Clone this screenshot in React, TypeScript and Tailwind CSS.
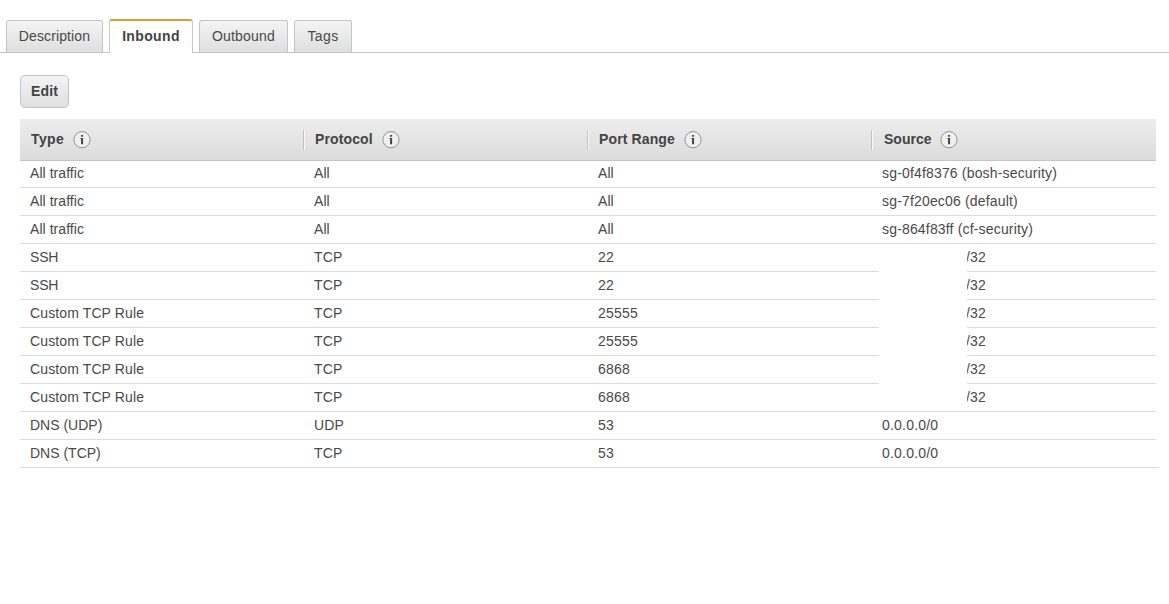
const tabs = [
  { label: "Description", size: "w-[97px]", spacing: "tracking-[0.12px]" },
  { label: "Inbound", size: "w-[84px]", spacing: "tracking-[0.36px]", active: true },
  { label: "Outbound", size: "w-[89px]", spacing: "tracking-[0.2px]" },
  { label: "Tags", size: "w-[58px]", spacing: "tracking-[0.4px]" },
];

const columns = [
  { label: "Type", spacing: "tracking-[0.4px]", width: "w-[41.5px]" },
  { label: "Protocol", spacing: "tracking-[0.12px]", width: "w-[66.5px]" },
  { label: "Port Range", spacing: "tracking-[0.12px]", width: "w-[84.5px]" },
  { label: "Source", spacing: "tracking-[0px]", width: "w-[55.5px]" },
];

const rules = [
  ["All traffic", "All", "All", "sg-0f4f8376 (bosh-security)"],
  ["All traffic", "All", "All", "sg-7f20ec06 (default)"],
  ["All traffic", "All", "All", "sg-864f83ff (cf-security)"],
  ["SSH", "TCP", "22", "/32"],
  ["SSH", "TCP", "22", "/32"],
  ["Custom TCP Rule", "TCP", "25555", "/32"],
  ["Custom TCP Rule", "TCP", "25555", "/32"],
  ["Custom TCP Rule", "TCP", "6868", "/32"],
  ["Custom TCP Rule", "TCP", "6868", "/32"],
  ["DNS (UDP)", "UDP", "53", "0.0.0.0/0"],
  ["DNS (TCP)", "TCP", "53", "0.0.0.0/0"],
];

function cellSpacing(text: string) {
  if (text.startsWith("All")) return "tracking-[0.05px]";
  if (text === "SSH") return "tracking-[-0.2px]";
  if (text.startsWith("DNS")) return "tracking-[0px]";
  if (text.startsWith("Custom")) return "tracking-[0.12px]";
  if (text.startsWith("sg-")) return "tracking-[0.17px]";
  return "tracking-[0.2px]";
}

function InfoIcon() {
  return (
    <svg width="18" height="18" viewBox="0 0 18 18" className="shrink-0">
      <circle cx="9" cy="8.7" r="8.1" fill="#f0f0f0" stroke="#929292" strokeWidth="1" />
      <path d="M8 4h2.1v1.8H8zM7.2 7h2.9v6.2H8V7.8h-.8z" fill="#4a4a4a" />
    </svg>
  );
}

export default function App() {
  return (
    <div className="h-[604px] w-full overflow-hidden bg-white font-['Liberation_Sans',Arial,sans-serif] text-[14px] leading-[18px] text-[#494949]">
      <div className="flex h-[53px] items-end gap-1.5 border-b border-[#c4c4c4] pl-1.5">
        {tabs.map((tab) => (
          <div
            key={tab.label}
            className={
              tab.active
                ? `-mb-px flex h-[34px] justify-center rounded-t-[3px] border-x border-t-2 border-x-[#c8c8c8] border-t-[#dd9f35] bg-white pt-1.5 font-bold text-[#444] ${tab.size} ${tab.spacing}`
                : `flex h-8 justify-center rounded-t-[3px] border border-b-0 border-[#c4c4c4] bg-linear-to-b from-[#f4f4f4] to-[#dfdfdf] pt-1.5 ${tab.size} ${tab.spacing}`
            }
          >
            {tab.label}
          </div>
        ))}
      </div>

      <div className="pt-[22px] pl-5">
        <button className="flex h-[33px] w-[49px] justify-center rounded-[5px] border border-[#c4c4c4] bg-linear-to-b from-[#f4f4f4] to-[#dfdfdf] pt-1.5 font-bold tracking-[0.2px] text-[#444]">
          Edit
        </button>

        <div className="mt-[11px] w-[1136px]">
          <div className="grid h-[42px] grid-cols-[283px_284px_284px_285px] items-center border-b border-[#c4c4c4] bg-linear-to-b from-[#ededed] to-[#dcdcdc] text-[#444]">
            {columns.map((col, i) => (
              <div
                key={col.label}
                className={`flex h-5 items-center font-bold ${
                  i === 0
                    ? ""
                    : "border-l border-[#c2c2c2] shadow-[inset_1px_0_0_#f8f8f8]"
                } ${i === 3 ? "pl-3" : "pl-[11px]"} ${col.spacing}`}
              >
                <span className={`-mt-0.5 whitespace-nowrap ${col.width}`}>{col.label}</span>
                <InfoIcon />
              </div>
            ))}
          </div>

          <div className="relative">
            {rules.map((cells, i) => {
              const masked = cells[3] === "/32";
              return (
                <div
                  key={i}
                  className={`grid grid-cols-[284px_284px_284px_284px] border-b border-[#dcdcdc] ${
                    i === 0 ? "h-[27px] pt-[3px]" : "h-7 pt-1"
                  } ${i === rules.length - 1 ? "w-[1139px]" : ""}`}
                >
                  {cells.map((cell, c) => (
                    <span
                      key={c}
                      className={`${c === 3 && masked ? "pl-[94px]" : "pl-2.5"} ${cellSpacing(cell)}`}
                    >
                      {cell}
                    </span>
                  ))}
                </div>
              );
            })}
            <div className="absolute top-[83px] left-[859px] h-[167px] w-[88px] bg-white" />
          </div>
        </div>
      </div>
    </div>
  );
}
